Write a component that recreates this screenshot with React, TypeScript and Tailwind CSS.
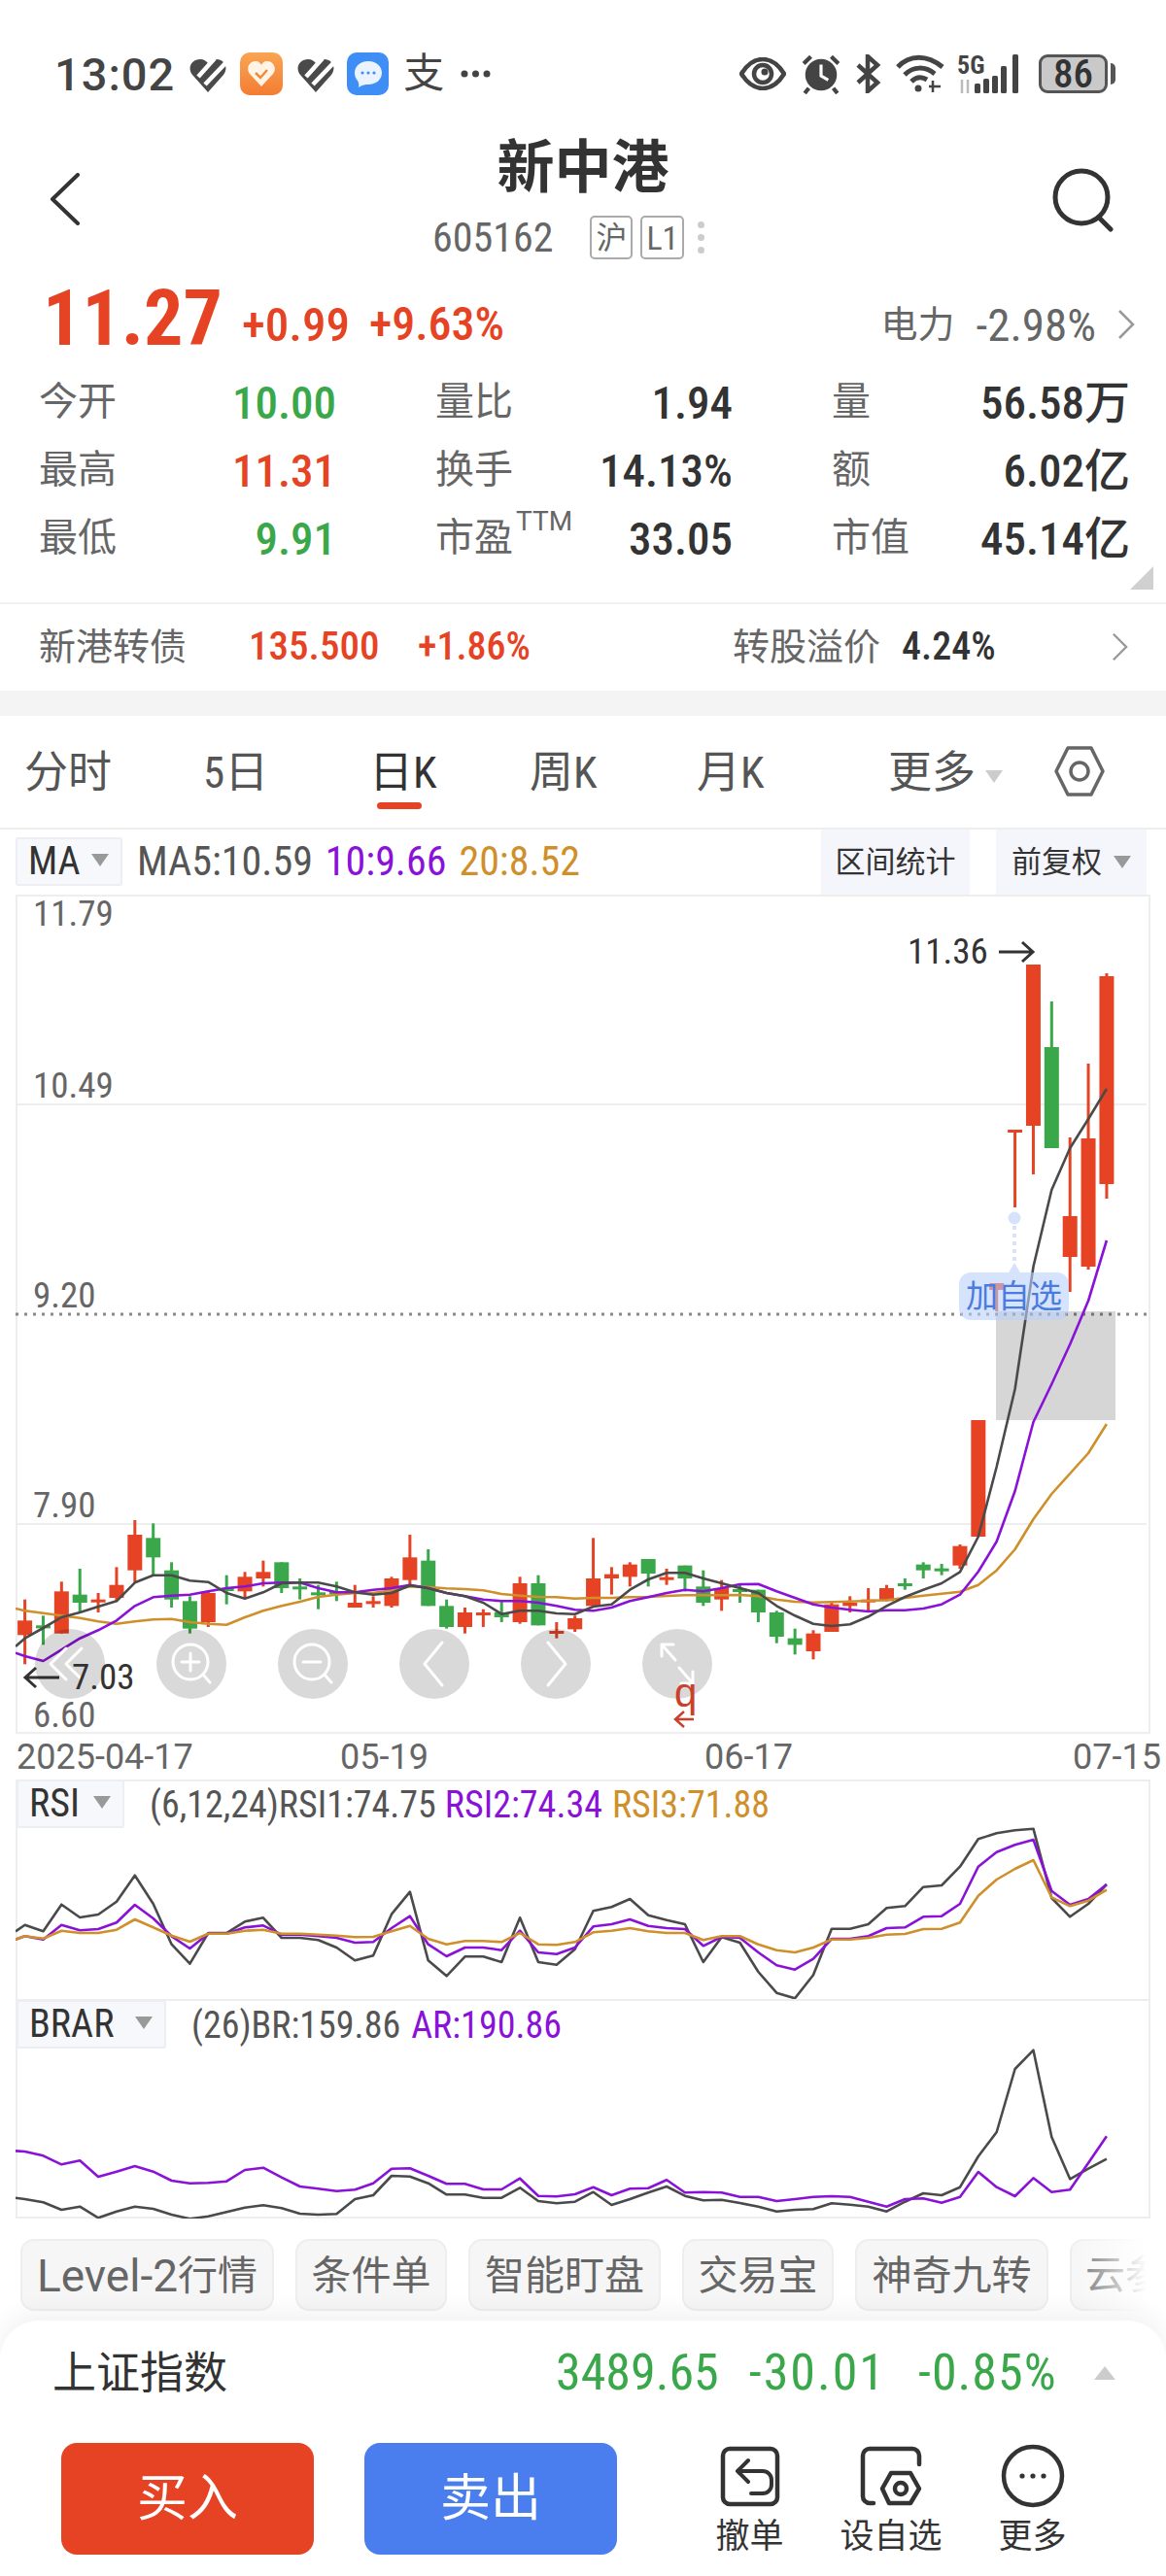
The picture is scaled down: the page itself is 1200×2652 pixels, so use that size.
const R = '#e64325', G = '#3aa84a', K = '#4a4a4a', P = '#8a12d8', O = '#cf8f2a';
const xi = (i: number) => 25.6 + 18.87 * i;
const z = (v: number) => 1550 + v / 3;
// hi, top, bottom, low in crop units, then colour
const raw: [number, number, number, number, number][] = [
[290,355,400,490,1],[340,370,375,430,0],[235,265,395,395,1],[195,275,300,330,0],[270,290,296,330,1],[190,245,285,295,1],[45,90,200,240,1],[55,100,160,215,0],
[175,200,290,315,0],[280,295,380,395,0],[265,270,360,375,1],[215,255,263,305,0],[205,220,265,285,1],[170,205,225,250,1],[175,175,255,270,0],[225,250,256,290,0],
[245,268,275,320,0],[235,264,270,295,0],[245,300,315,315,1],[280,295,303,315,1],[220,225,310,315,1],[90,160,230,245,1],[135,170,310,310,0],[290,310,375,380,0],
[315,330,375,395,1],[320,330,336,375,1],[295,330,345,360,0],[220,240,360,365,1],[215,240,370,370,0],[360,387,393,410,1],[340,348,382,390,1],[100,225,310,310,1],
[190,212,225,275,1],[175,182,220,250,1],[165,165,210,250,0],[195,221,227,245,1],[185,185,225,265,0],[200,250,300,310,0],[230,255,290,325,1],[245,258,265,300,0],
[260,260,330,360,0],[325,330,405,425,0],[380,410,430,460,0],[385,395,450,475,1],[300,305,390,390,1],[280,300,310,330,1],[255,290,296,325,1],[245,255,295,295,1],
[225,240,248,260,0],[175,182,200,225,0],[180,194,199,215,0],[120,125,185,195,1]];
const tail: [number, number, number, number, number][] = [
[1462,1462,1582,1582,1],[1321,1321,1328,1350,1],[1163,1163,1166,1243,1],[993,993,1159,1209,1],[1031,1078,1182,1182,0],[1171,1252,1294,1330,1],[1095,1172,1304,1307,1],[1002,1005,1219,1234,1]];
const candles = [...raw.map(c => [z(c[0]), z(c[1]), z(c[2]), z(c[3]), c[4]] as number[]), ...tail];

const ma5 = [410,378,345,330,312,295,238,215,215,232,236,270,287,268,240,238,238,250,268,275,270,247,255,270,280,300,335,325,325,333,335,312,305,260,228,208,208,225,240,255,270,310,340,365,372,367,343,310,282,260,240,205].map(z).concat([1582,1510,1430,1304,1225,1182,1152,1121]);
const ma10 = [465,480,445,410,385,355,310,283,278,275,265,255,250,240,238,238,255,268,268,260,255,245,255,270,280,290,295,295,300,310,322,325,315,295,283,270,260,265,255,243,242,265,285,305,315,322,327,323,323,318,305,275].map(z).concat([1618,1587,1535,1464,1425,1384,1339,1277]);
const ma20 = [325,332,340,347,358,365,358,352,350,360,365,368,345,325,310,297,282,275,270,270,262,250,252,256,258,262,273,278,282,283,287,285,285,283,282,279,277,277,277,276,280,290,297,299,298,296,294,292,285,278,272,266,245,200,135].map(z).concat([1564,1538,1517,1496,1466]);
const pts = (a: number[], first?: number) => (first !== undefined ? `16,${first} ` : '') + a.map((y, i) => `${xi(i).toFixed(1)},${y.toFixed(1)}`).join(' ');
const p5 = (a: number[], first: number) => pts(a.map(v => 1800 + v / 3), 1800 + first / 3);

const rsi1 = [545,565,482,522,513,473,392,480,605,665,570,570,535,523,585,585,592,615,655,640,512,443,655,703,643,643,660,523,660,668,620,502,490,465,515,530,543,660,583,600,690,755,772,700,557,557,543,493,487,428,423,365,280,262,253,248,462,520,480,420];
const rsi2 = [580,590,545,562,558,538,483,525,580,618,572,572,553,547,575,575,580,585,600,598,555,518,605,642,615,615,623,563,630,635,615,550,543,528,548,555,558,610,582,585,630,670,683,650,588,588,580,555,553,520,518,480,365,320,298,282,440,483,465,420];
const rsi3 = [580,587,563,570,570,560,528,553,578,597,572,572,563,560,572,572,575,578,583,582,565,548,588,605,595,595,598,570,605,607,598,568,563,555,565,570,570,592,580,580,605,623,630,615,590,590,585,575,573,558,557,538,455,405,372,345,460,487,470,437];
const br = [1392,1402,1425,1415,1450,1430,1415,1422,1440,1453,1445,1432,1418,1411,1420,1437,1440,1438,1392,1380,1320,1322,1343,1378,1378,1388,1388,1357,1398,1405,1400,1370,1410,1392,1372,1353,1382,1396,1394,1404,1415,1430,1425,1423,1405,1409,1415,1430,1400,1374,1380,1355,1260,1185,990,932,1200,1330,1298,1268];
const ar = [1245,1258,1285,1273,1323,1307,1290,1307,1335,1343,1342,1337,1302,1295,1325,1353,1360,1367,1363,1343,1298,1297,1320,1345,1345,1362,1362,1328,1382,1384,1377,1355,1380,1360,1358,1333,1372,1370,1372,1385,1385,1398,1392,1385,1383,1385,1400,1415,1392,1390,1403,1385,1308,1355,1383,1327,1370,1363,1280,1198];

function Tri({ c = 'border-t-[#999]' }: { c?: string }) {
  return <span className={`inline-block w-0 h-0 border-x-[9px] border-x-transparent border-t-[13px] ${c}`} />;
}
function Chev({ className }: { className: string }) {
  return <svg viewBox="0 0 18 30" className={className} fill="none" stroke="#999" strokeWidth="2.5"><path d="M2 1 L16 15 L2 29" /></svg>;
}
function Slash() {
  return (
    <svg width="38" height="36" viewBox="0 0 38 36" className="mt-[4px]">
      <path d="M19 35 L3 17 C-3 9 3 1 11 1 C15 1 17 3 19 5 C21 3 24 1 28 1 C35 1 41 9 35 17 Z" fill="#4a4a4a" />
      <path d="M9 19 L26 0 M16 27 L37 5" stroke="#fff" strokeWidth="4.5" />
    </svg>
  );
}
function Stat({ l, v, vc = 'text-[#333]', sup }: { l: string; v: string; vc?: string; sup?: boolean }) {
  return (
    <div className="flex items-center justify-between h-[70px]">
      <span className="relative text-[40px] leading-none text-[#666]">{l}{sup && <span className="absolute left-[83px] -top-[11px] font-['Roboto',sans-serif] text-[28px] leading-none text-[#666]">TTM</span>}</span>
      <span className={`text-[47px] leading-none font-medium ${vc}`}>{v}</span>
    </div>
  );
}
function Box({ t, w }: { t: string; w: string }) {
  return (
    <div className={`flex items-center h-[50px] ${w} bg-[#f7f8fc] border-2 border-[#eceef3] rounded-[3px] pl-[11px]`}>
      <span className="text-[40px] leading-none text-[#333]">{t}</span>
      <span className="ml-auto mr-[12px]"><Tri /></span>
    </div>
  );
}
function RoundBtn({ children }: { children: React.ReactNode }) {
  return (
    <div className="w-[72px] h-[72px] rounded-full bg-black/15 flex items-center justify-center">
      <svg width="72" height="72" viewBox="0 0 72 72" fill="none" stroke="#fff" strokeWidth="3" strokeLinecap="round" strokeLinejoin="round">{children}</svg>
    </div>
  );
}
function Chip({ children, w }: { children: React.ReactNode; w: string }) {
  return <div className={`flex-none h-[74px] ${w} flex items-center justify-center bg-[#f6f6f6] border-2 border-[#eeeeee] rounded-[14px] text-[41px] leading-none text-[#666] pt-[2px] whitespace-nowrap`}>{children}</div>;
}
function Act({ t, children, w }: { t: string; children: React.ReactNode; w: string }) {
  return (
    <div className={`flex flex-col items-center ${w}`}>
      <svg width="70" height="70" viewBox="0 0 70 70" fill="none" stroke="#333" strokeWidth="4.5" strokeLinecap="round" strokeLinejoin="round">{children}</svg>
      <span className="mt-[7px] text-[35px] leading-[40px] text-[#333] whitespace-nowrap">{t}</span>
    </div>
  );
}

export default function App() {
  return (
    <div className="relative w-[1200px] h-[2652px] overflow-hidden bg-white flex flex-col font-['Roboto_Condensed','Noto_Sans_CJK_SC',sans-serif]">
      {/* status bar */}
      <div className="flex-none h-[130px] pt-[22px] pl-[56px] pr-[52px] flex items-center justify-between">
        <div className="flex items-center">
          <span className="font-['Roboto',sans-serif] font-medium text-[47px] leading-none text-[#444] tracking-[1px]">13:02</span>
          <span className="ml-[15px] flex"><Slash /></span>
          <div className="ml-[14px] w-[44px] h-[44px] rounded-[10px] bg-linear-to-b from-[#f8a552] to-[#f47c32] flex items-center justify-center">
            <svg width="30" height="30" viewBox="0 0 30 30"><path d="M15 28 L3 15 C-2 8 4 1 10 2 C12 2 14 4 15 6 C16 4 18 2 20 2 C26 1 32 8 27 15 Z" fill="#fff4e6" /><path d="M9 14 L14 19 L21 11" stroke="#f08a3c" strokeWidth="2.5" fill="none" /></svg>
          </div>
          <span className="ml-[15px] flex"><Slash /></span>
          <div className="ml-[13px] w-[43px] h-[44px] rounded-[10px] bg-[#3f8ef5] flex items-center justify-center">
            <svg width="32" height="32" viewBox="0 0 32 32"><path d="M16 3 C25 3 30 9 30 15 C30 22 24 27 16 27 C13 27 11 27 6 30 C7 27 6 25 5 23 C3 21 2 18 2 15 C2 9 7 3 16 3 Z" fill="#eaf3ff" /><circle cx="10" cy="15" r="1.6" fill="#3f8ef5" /><circle cx="16" cy="15" r="1.6" fill="#3f8ef5" /><circle cx="22" cy="15" r="1.6" fill="#3f8ef5" /></svg>
          </div>
          <span className="ml-[15px] text-[42px] leading-none text-[#444]">支</span>
          <svg width="31" height="8" viewBox="0 0 31 8" className="ml-[17px]"><circle cx="4" cy="4" r="3.5" fill="#444" /><circle cx="15.5" cy="4" r="3.5" fill="#444" /><circle cx="27" cy="4" r="3.5" fill="#444" /></svg>
        </div>
        <div className="flex items-center">
          <svg width="48" height="34" viewBox="0 0 48 34" fill="none"><path d="M2 17 C10 4 18 2 24 2 C30 2 38 4 46 17 C38 30 30 32 24 32 C18 32 10 30 2 17 Z" stroke="#444" strokeWidth="4.5" /><circle cx="24" cy="17" r="9" stroke="#444" strokeWidth="4.5" /><circle cx="26" cy="15" r="3.5" fill="#444" /></svg>
          <svg width="42" height="42" viewBox="0 0 40 40" className="ml-[15px]" fill="none"><circle cx="20" cy="21" r="15.5" fill="#444" /><path d="M20 11 V22 L27 26" stroke="#fff" strokeWidth="3" /><path d="M3 10 L10 3 M37 10 L30 3 M8 34 L4 39 M32 34 L36 39" stroke="#444" strokeWidth="4" /></svg>
          <svg width="27" height="40" viewBox="0 0 27 40" className="ml-[14px]" fill="none" stroke="#444" strokeWidth="4.5"><path d="M3 11 L23 29 L13 38 V2 L23 11 L3 29" /></svg>
          <svg width="50" height="40" viewBox="0 0 50 40" className="ml-[15px]" fill="none" stroke="#444" strokeWidth="5"><path d="M2 13 C14 0 32 0 48 13" /><path d="M9 21 C18 12 30 12 40 20" /><path d="M16 28 C21 23 27 23 32 26" /><circle cx="23" cy="35" r="3.5" fill="#444" stroke="none" /><path d="M38 27 V39 M34 33 H46" strokeWidth="2.5" /></svg>
          <svg width="65" height="40" viewBox="0 0 65 40" className="ml-[13px] overflow-visible"><text x="0" y="20" fontSize="26" fontWeight="700" fill="#444" fontFamily="Roboto Condensed">5G</text><path d="M5 26 V40 M11 26 V40" stroke="#bbb" strokeWidth="2.5" /><rect x="18" y="30" width="6" height="10" rx="1.5" fill="#444" /><rect x="27" y="25" width="6" height="15" rx="1.5" fill="#444" /><rect x="36" y="22" width="6" height="18" rx="1.5" fill="#444" /><rect x="45" y="12" width="6" height="28" rx="1.5" fill="#444" /><rect x="57" y="0" width="6" height="40" rx="1.5" fill="#444" /></svg>
          <div className="ml-[19px] w-[71px] h-[40px] rounded-[9px] border-[3px] border-[#555] bg-[#c9c9c9] flex items-center justify-center text-[41px] leading-none font-medium text-[#333]">86</div>
          <div className="ml-[3px] w-[5px] h-[22px] rounded-r-full bg-[#555]" />
        </div>
      </div>

      {/* header */}
      <div className="flex-none h-[150px] grid grid-cols-[445px_310px_445px]">
        <div className="pl-[51px] pt-[48px]">
          <svg width="32" height="54" viewBox="0 0 32 54" fill="none" stroke="#333" strokeWidth="4" strokeLinecap="round" strokeLinejoin="round"><path d="M29 2 L3 27 L29 52" /></svg>
        </div>
        <div className="flex flex-col">
          <div className="mt-[9px] h-[68px] text-center text-[59px] leading-[68px] font-bold text-[#333]">新中港</div>
          <div className="mt-[15px] flex items-center h-[45px]">
            <span className="text-[42px] leading-none text-[#666]">605162</span>
            <span className="ml-[38px] w-[44px] h-[45px] rounded-[5px] border-2 border-[#aaa] flex items-center justify-center text-[32px] leading-none text-[#666]">沪</span>
            <span className="ml-[8px] w-[45px] h-[45px] rounded-[5px] border-2 border-[#aaa] flex items-center justify-center text-[34px] leading-none text-[#666]">L1</span>
            <span className="ml-[14px] flex flex-col gap-[6px]"><i className="block w-[7px] h-[7px] rounded-full bg-[#ccc]" /><i className="block w-[7px] h-[7px] rounded-full bg-[#ccc]" /><i className="block w-[7px] h-[7px] rounded-full bg-[#ccc]" /></span>
          </div>
        </div>
        <div className="flex justify-end pr-[52px] pt-[43px]">
          <svg width="66" height="66" viewBox="0 0 66 66" fill="none" stroke="#333" strokeWidth="5" strokeLinecap="round"><circle cx="31" cy="30" r="27" /><path d="M50 52 L61 63" /></svg>
        </div>
      </div>

      {/* price */}
      <div className="relative flex-none h-[342px] border-b-2 border-[#f2f2f2]">
        <div className="h-[96px] flex items-center pl-[44px] pr-[32px]">
          <span className="text-[80px] leading-none font-bold text-[#e64325]">11.27</span>
          <span className="ml-[20px] mt-[12px] text-[49px] leading-none font-medium text-[#e64325]">+0.99</span>
          <span className="ml-[20px] mt-[12px] text-[48px] leading-none font-medium text-[#e64325]">+9.63%</span>
          <span className="ml-auto mt-[12px] text-[38px] leading-none text-[#666]">电力</span>
          <span className="ml-[22px] mt-[12px] text-[47px] leading-none text-[#666]">-2.98%</span>
          <Chev className="ml-[22px] mt-[12px] w-[18px] h-[30px]" />
        </div>
        <div className="mt-[3px] grid grid-cols-[306px_306px_307px] gap-x-[102px] pl-[40px]">
          <div>
            <Stat l="今开" v="10.00" vc="text-[#3aa84a]" />
            <Stat l="最高" v="11.31" vc="text-[#e64325]" />
            <Stat l="最低" v="9.91" vc="text-[#3aa84a]" />
          </div>
          <div>
            <Stat l="量比" v="1.94" />
            <Stat l="换手" v="14.13%" />
            <Stat l="市盈" v="33.05" sup />
          </div>
          <div>
            <Stat l="量" v="56.58万" />
            <Stat l="额" v="6.02亿" />
            <Stat l="市值" v="45.14亿" />
          </div>
        </div>
        <div className="absolute left-[1163px] top-[303px] w-0 h-0 border-l-[24px] border-l-transparent border-b-[24px] border-b-[#d0d0d0]" />
      </div>

      {/* bond */}
      <div className="flex-none h-[89px] pb-[2px] pl-[40px] grid grid-cols-[216px_174px_324px_174px_216px_40px] items-center">
        <span className="text-[38px] leading-none text-[#666]">新港转债</span>
        <span className="text-[41px] leading-none font-medium text-[#e64325]">135.500</span>
        <span className="text-[40px] leading-none font-medium text-[#e64325]">+1.86%</span>
        <span className="text-[38px] leading-none text-[#666]">转股溢价</span>
        <span className="text-[40px] leading-none font-medium text-[#333]">4.24%</span>
        <Chev className="w-[17px] h-[30px]" />
      </div>
      <div className="flex-none h-[26px] bg-[#f4f4f4]" />

      {/* tabs */}
      <div className="relative flex-none h-[117px] border-b-2 border-[#eeeeee] pt-[2px] pl-[25px] grid grid-cols-[184px_171px_165px_172px_197px_170px] items-center text-[45px] leading-none text-[#555]">
        <span>分时</span>
        <span>5日</span>
        <span className="relative text-[#333]">日K<i className="absolute left-[8px] top-[53px] block w-[46px] h-[7px] rounded-full bg-[#e64325]" /></span>
        <span>周K</span>
        <span>月K</span>
        <span className="flex items-center">更多<span className="ml-[10px] -mt-[10px]"><Tri c="border-t-[#ccc]" /></span></span>
        <svg width="52" height="52" viewBox="0 0 52 52" fill="none" stroke="#666" strokeWidth="3.5" strokeLinejoin="round" className="absolute left-[1085px] top-[31px]"><path d="M14 2 H38 L50 26 L38 50 H14 L2 26 Z" /><circle cx="26" cy="26" r="9" /></svg>
      </div>

      {/* MA row */}
      <div className="flex-none h-[67px] flex pl-[16px]">
        <div className="mt-[8px]"><Box t="MA" w="w-[110px]" /></div>
        <span className="ml-[15px] mt-[12px] text-[42px] leading-none text-[#555]">MA5:10.59</span>
        <span className="ml-[13px] mt-[12px] text-[42px] leading-none text-[#8a12d8]">10:9.66</span>
        <span className="ml-[13px] mt-[12px] text-[42px] leading-none text-[#cf8f2a]">20:8.52</span>
        <div className="ml-auto w-[153px] h-[67px] bg-[#f5f6fb] flex items-center justify-center text-[31px] leading-none text-[#333]">区间统计</div>
        <div className="ml-[27px] mr-[20px] w-[155px] h-[67px] bg-[#f5f6fb] flex items-center justify-center gap-[12px] text-[31px] leading-none text-[#333]">前复权<Tri /></div>
      </div>

      {/* main chart */}
      <div className="relative flex-none mx-[16px] h-[864px] border-2 border-[#eeeeee]">
        <svg viewBox="16 921 1164 864" className="absolute -inset-[2px] w-[1164px] h-[864px]">
          <path d="M16 1137 H1180 M16 1569 H1180" stroke="#eeeeee" strokeWidth="2" />
          <path d="M16 1353 H1180" stroke="#888" strokeWidth="3" strokeDasharray="3 6" />
          {candles.map((c, i) => {
            const col = c[4] ? R : G;
            return (
              <g key={i}>
                <rect x={xi(i) - 1.5} y={c[0]} width="3" height={c[3] - c[0]} fill={col} />
                <rect x={xi(i) - 7.5} y={c[1]} width="15" height={Math.max(c[2] - c[1], 3)} fill={col} />
              </g>
            );
          })}
          <rect x="1025" y="1350" width="123" height="112" fill="#000" fillOpacity="0.16" />
          <polyline points={pts(ma20, z(318))} fill="none" stroke={O} strokeWidth="2.6" strokeLinejoin="round" />
          <polyline points={pts(ma10, z(455))} fill="none" stroke={P} strokeWidth="2.6" strokeLinejoin="round" />
          <polyline points={pts(ma5, z(435))} fill="none" stroke={K} strokeWidth="2.6" strokeLinejoin="round" />
          <path d="M1044 1262 V1302" stroke="#d6e3fb" strokeWidth="4" strokeDasharray="4 4" />
          <circle cx="1044" cy="1254" r="6.5" fill="#d6e3fb" />
          <path d="M1044 1300 L1038 1310 H1050 Z" fill="#d6e3fb" />
          <path d="M1028 980 H1062 M1052 970 L1063 980 L1052 990" fill="none" stroke="#333" strokeWidth="3" />
          <path d="M61 1727 H27 M37 1717 L26 1727 L37 1737" fill="none" stroke="#333" strokeWidth="3" />
          <path d="M714 1770 H696 M704 1762 L695 1770 L704 1778" fill="none" stroke="#c9412a" strokeWidth="2.5" />
        </svg>
        <span className="absolute left-[16px] -top-[2px] text-[37px] leading-[40px] text-[#666]">11.79</span>
        <span className="absolute left-[16px] top-[175px] text-[37px] leading-[40px] text-[#666]">10.49</span>
        <span className="absolute left-[16px] top-[391px] text-[37px] leading-[40px] text-[#666]">9.20</span>
        <span className="absolute left-[16px] top-[607px] text-[37px] leading-[40px] text-[#666]">7.90</span>
        <span className="absolute left-[16px] top-[823px] text-[37px] leading-[40px] text-[#666]">6.60</span>
        <span className="absolute left-[916px] top-[37px] text-[37px] leading-[40px] text-[#333]">11.36</span>
        <div className="absolute left-[969px] top-[387px] w-[113px] h-[49px] rounded-[12px] bg-[#b9d0fa]/60 flex items-center justify-center text-[33px] leading-none text-[#4a7be0]">加自选</div>
        <div className="absolute left-[18px] top-[754px] flex gap-[53px]">
          <RoundBtn><path d="M32 20 L16 36 L32 52 M48 20 L32 36 L48 52" /></RoundBtn>
          <RoundBtn><circle cx="35" cy="34" r="18" /><path d="M48 47 L55 55 M35 25 V43 M26 34 H44" /></RoundBtn>
          <RoundBtn><circle cx="35" cy="34" r="18" /><path d="M48 47 L55 55 M26 34 H44" /></RoundBtn>
          <RoundBtn><path d="M44 14 L26 36 L44 58" /></RoundBtn>
          <RoundBtn><path d="M28 14 L46 36 L28 58" /></RoundBtn>
          <RoundBtn><path d="M20 16 L34 32 M20 16 V28 M20 16 H32 M52 56 L38 40 M52 56 V44 M52 56 H40" /></RoundBtn>
        </div>
        <span className="absolute left-[56px] top-[784px] text-[37px] leading-[40px] text-[#333]">7.03</span>
        <span className="absolute left-[676px] top-[798px] font-['Liberation_Sans',sans-serif] text-[42px] leading-[44px] text-[#c9412a]">q</span>
      </div>

      {/* dates */}
      <div className="flex-none h-[47px] pl-[17px] flex items-center font-['Roboto',sans-serif] text-[36px] leading-none text-[#666] whitespace-nowrap">
        <span className="flex-none w-[333px]">2025-04-17</span>
        <span className="flex-none w-[375px]">05-19</span>
        <span className="flex-none w-[379px]">06-17</span>
        <span className="flex-none">07-15</span>
      </div>

      {/* RSI */}
      <div className="relative flex-none mx-[16px] h-[226px] border-x-2 border-t-2 border-[#eeeeee]">
        <svg viewBox="16 1832 1164 226" className="absolute -left-[2px] -top-[2px] w-[1164px] h-[226px]" fill="none" strokeWidth="2.6" strokeLinejoin="round">
          <polyline points={p5(rsi1, 565)} stroke={K} />
          <polyline points={p5(rsi2, 590)} stroke={P} />
          <polyline points={p5(rsi3, 590)} stroke={O} />
        </svg>
        <div className="absolute -left-[1px] -top-[2px] flex items-start">
          <Box t="RSI" w="w-[111px]" />
          <span className="ml-[26px] mt-[7px] text-[38px] leading-none text-[#555]">(6,12,24)RSI1:74.75</span>
          <span className="ml-[9px] mt-[7px] text-[38px] leading-none text-[#8a12d8]">RSI2:74.34</span>
          <span className="ml-[10px] mt-[7px] text-[38px] leading-none text-[#cf8f2a]">RSI3:71.88</span>
        </div>
      </div>

      {/* BRAR */}
      <div className="relative flex-none mx-[16px] h-[226px] border-2 border-[#eeeeee]">
        <svg viewBox="16 2058 1164 226" className="absolute -left-[2px] -top-[2px] w-[1164px] h-[226px]" fill="none" strokeWidth="2.6" strokeLinejoin="round">
          <polyline points={p5(br, 1388)} stroke={K} />
          <polyline points={p5(ar, 1243)} stroke={P} />
        </svg>
        <div className="absolute -left-[1px] -top-[1px] flex items-start">
          <Box t="BRAR" w="w-[154px]" />
          <span className="ml-[26px] mt-[7px] text-[38px] leading-none text-[#555]">(26)BR:159.86</span>
          <span className="ml-[11px] mt-[7px] text-[38px] leading-none text-[#8a12d8]">AR:190.86</span>
        </div>
      </div>

      {/* chips */}
      <div className="relative flex-none h-[105px] pt-[21px] pl-[21px] flex gap-[22px] overflow-hidden">
        <Chip w="w-[261px]"><span className="font-['Roboto',sans-serif] text-[46px]">Level-2</span>行情</Chip>
        <Chip w="w-[156px]">条件单</Chip>
        <Chip w="w-[198px]">智能盯盘</Chip>
        <Chip w="w-[156px]">交易宝</Chip>
        <Chip w="w-[199px]">神奇九转</Chip>
        <div className="flex-none w-[101px] h-[74px] bg-[#f6f6f6] border-y-2 border-l-2 border-[#eeeeee] rounded-l-[14px] pl-[14px] pt-[15px] text-[41px] leading-none text-[#666] whitespace-nowrap">云参</div>
        <div className="absolute right-0 top-0 h-full w-[100px] bg-linear-to-r from-white/0 to-white to-[80%]" />
      </div>

      {/* bottom sheet */}
      <div className="relative flex-1 bg-white rounded-t-[40px] shadow-[0_-10px_24px_rgba(0,0,0,0.05)]">
        <div className="h-[108px] pl-[54px] flex items-center">
          <span className="text-[45px] leading-none text-[#333]">上证指数</span>
          <span className="ml-[338px] text-[52px] leading-none text-[#3aa84a]">3489.65</span>
          <span className="ml-[31px] text-[52px] leading-none text-[#3aa84a] tracking-[2px]">-30.01</span>
          <span className="ml-[33px] text-[52px] leading-none text-[#3aa84a] tracking-[1px]">-0.85%</span>
          <span className="ml-[38px] w-0 h-0 border-x-[11px] border-x-transparent border-b-[14px] border-b-[#cccccc]" />
        </div>
        <div className="mt-[18px] pl-[63px] flex items-start">
          <div className="w-[260px] h-[115px] rounded-[16px] bg-[#e64325] flex items-center justify-center text-[52px] leading-none text-white">买入</div>
          <div className="ml-[52px] w-[260px] h-[115px] rounded-[16px] bg-[#4a7dee] flex items-center justify-center text-[52px] leading-none text-white">卖出</div>
          <div className="ml-[64px] flex">
            <Act t="撤单" w="w-[145px]">
              <path d="M20 6 H56 a7 7 0 0 1 7 7 V56 a7 7 0 0 1 -7 7 H14 a7 7 0 0 1 -7 -7 V13 a7 7 0 0 1 7 -7 H22" />
              <path d="M33 18 L22 29 L33 40 M22 29 H48 a9 9 0 0 1 9 9 V43 a9 9 0 0 1 -9 9 H36" strokeWidth="4" />
            </Act>
            <Act t="设自选" w="w-[146px]">
              <path d="M64 22 V13 a7 7 0 0 0 -7 -7 H13 a7 7 0 0 0 -7 7 V55 a7 7 0 0 0 7 7 H17" />
              <path d="M33 62 L26 47 L35 31 H55 L64 47 L55 62 Z" />
              <circle cx="45" cy="47" r="6" />
            </Act>
            <Act t="更多" w="w-[145px]">
              <circle cx="35" cy="34" r="30" />
              <circle cx="24" cy="34" r="2.6" fill="#333" stroke="none" /><circle cx="35" cy="34" r="2.6" fill="#333" stroke="none" /><circle cx="46" cy="34" r="2.6" fill="#333" stroke="none" />
            </Act>
          </div>
        </div>
      </div>
    </div>
  );
}
